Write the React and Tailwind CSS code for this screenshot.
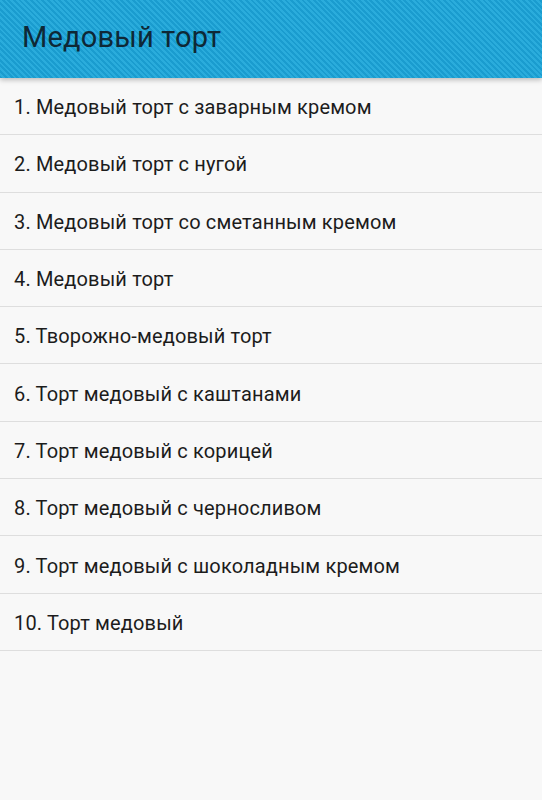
const items = [
  '1. Медовый торт с заварным кремом',
  '2. Медовый торт с нугой',
  '3. Медовый торт со сметанным кремом',
  '4. Медовый торт',
  '5. Творожно-медовый торт',
  '6. Торт медовый с каштанами',
  '7. Торт медовый с корицей',
  '8. Торт медовый с черносливом',
  '9. Торт медовый с шоколадным кремом',
  '10. Торт медовый',
]

export default function App() {
  return (
    <div className="min-h-[800px] w-[542px] bg-[#f8f8f8] font-['Roboto',sans-serif]">
      {/* Action bar */}
      <div className="relative z-10 flex h-[78px] items-center bg-[#1ea2d3] bg-[repeating-linear-gradient(45deg,#1a9ccf_0px,#1a9ccf_2px,#2aacdc_2px,#2aacdc_4px)] pl-[22px] shadow-[0_2px_5px_rgba(0,0,0,0.25)]">
        <h1 className="pb-[2px] text-[29px] tracking-[0.2px] text-[#0e2836]">Медовый торт</h1>
      </div>

      {/* List */}
      <ul>
        {items.map((item) => (
          <li
            key={item}
            className="flex h-[57.3px] items-center border-b border-[#dedede] pl-[14px] pt-[2px] text-[20px] tracking-[0.15px] text-[#1c1c1c]"
          >
            {item}
          </li>
        ))}
      </ul>
    </div>
  )
}
